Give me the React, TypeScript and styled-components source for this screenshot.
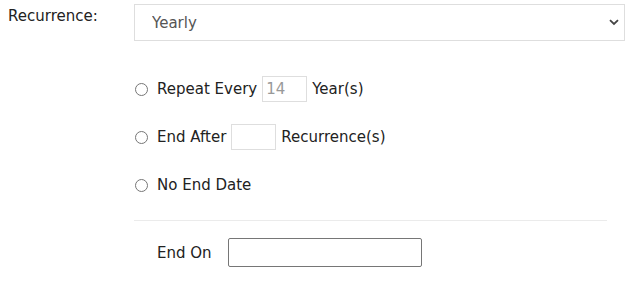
import React from "react";
import styled, { createGlobalStyle } from "styled-components";

const GlobalStyle = createGlobalStyle`
  body {
    margin: 0;
    background: #fff;
    font-family: "DejaVu Sans", "Open Sans", sans-serif;
    color: #222;
  }
`;

const Form = styled.div`
  width: 630px;
  height: 281px;
  padding: 4px 5px 0 8px;
  box-sizing: border-box;
`;

const FieldRow = styled.div`
  display: flex;
  align-items: flex-start;
`;

const FieldLabel = styled.label`
  width: 126px;
  flex: none;
  font-size: 15px;
  padding-top: 3px;
`;

const SelectWrap = styled.div`
  position: relative;
  flex: 1;
`;

const Select = styled.select`
  appearance: none;
  width: 100%;
  height: 37px;
  border: 1px solid #dedede;
  border-radius: 0;
  background: #fff;
  padding: 0 17px;
  font-family: inherit;
  font-size: 15px;
  color: #555;
  outline: none;
`;

const Chevron = styled.svg`
  position: absolute;
  right: 6px;
  top: 15px;
  pointer-events: none;
`;

const Options = styled.div`
  margin-left: 126px;
  padding-top: 35px;
  display: flex;
  flex-direction: column;
  gap: 22px;
`;

const OptionRow = styled.label`
  display: flex;
  align-items: center;
  height: 26px;
  font-size: 15px;
  gap: 5px;
`;

const Radio = styled.input.attrs({ type: "radio" })`
  margin: 0 4px 0 1px;
  width: 13px;
  height: 13px;
  accent-color: #555;
`;

const SmallInput = styled.input`
  width: 45px;
  height: 26px;
  box-sizing: border-box;
  border: 1px solid #dedede;
  padding: 0 3px;
  font-family: inherit;
  font-size: 15px;
  color: #999;
  outline: none;
`;

const Divider = styled.hr`
  margin: 22px 18px 0 0;
  border: none;
  border-top: 1px solid #ebebeb;
`;

const EndOnRow = styled.div`
  display: flex;
  align-items: center;
  gap: 16px;
  padding: 17px 0 0 23px;
  font-size: 15px;
`;

const DateInput = styled.input`
  width: 194px;
  height: 29px;
  box-sizing: border-box;
  border: 1px solid #767676;
  border-radius: 2px;
  font-family: inherit;
  outline: none;
`;

const Footer = styled.div`
  margin-left: 126px;
`;

export default function App() {
  return (
    <>
      <GlobalStyle />
      <Form>
        <FieldRow>
          <FieldLabel>Recurrence:</FieldLabel>
          <SelectWrap>
            <Select defaultValue="yearly">
              <option value="daily">Daily</option>
              <option value="weekly">Weekly</option>
              <option value="monthly">Monthly</option>
              <option value="yearly">Yearly</option>
            </Select>
            <Chevron width="10" height="7" viewBox="0 0 10 7">
              <path d="M1 1.2 L5 5 L9 1.2" fill="none" stroke="#444" strokeWidth="1.8" />
            </Chevron>
          </SelectWrap>
        </FieldRow>
        <Options>
          <OptionRow>
            <Radio name="rec" />
            Repeat Every
            <SmallInput defaultValue="14" />
            Year(s)
          </OptionRow>
          <OptionRow>
            <Radio name="rec" />
            End After
            <SmallInput />
            Recurrence(s)
          </OptionRow>
          <OptionRow>
            <Radio name="rec" />
            No End Date
          </OptionRow>
        </Options>
        <Footer>
          <Divider />
          <EndOnRow>
            End On
            <DateInput />
          </EndOnRow>
        </Footer>
      </Form>
    </>
  );
}
